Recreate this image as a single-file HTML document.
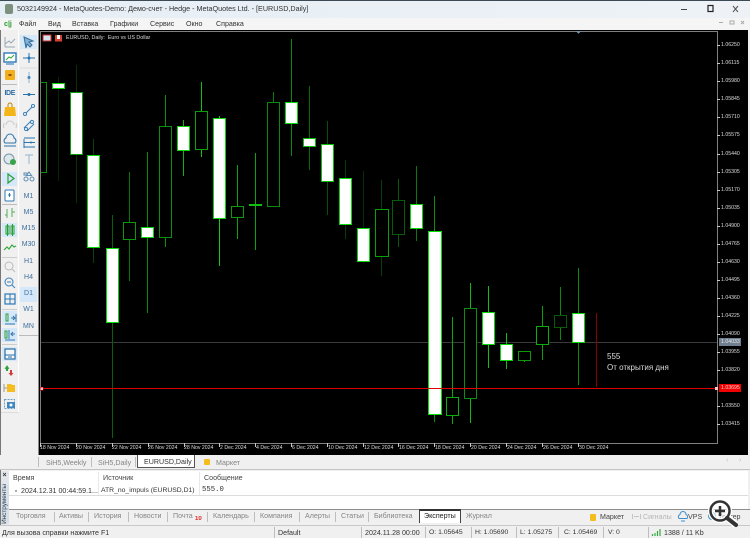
<!DOCTYPE html>
<html><head><meta charset="utf-8"><style>
html,body{margin:0;padding:0;width:750px;height:538px;overflow:hidden;background:#f0f0f0}
body{position:relative;font-family:"Liberation Sans","Noto Sans CJK SC",sans-serif}
.a{position:absolute}
.t{position:absolute;white-space:nowrap;line-height:10px;font-size:7.1px;color:#444;filter:blur(.2px)}
.g{color:#858585}
.s{position:absolute;width:1px;background:#bdbdbd}
.tf{position:absolute;left:20px;width:17px;height:14px;line-height:14px;text-align:center;font-size:7px;color:#3d6f9e;filter:blur(.2px)}
.ax{position:absolute;left:721px;font-size:5.2px;line-height:8px;color:#ddd;white-space:nowrap;filter:blur(.2px)}
.dt{position:absolute;top:444px;font-size:5.2px;line-height:8px;color:#ddd;white-space:nowrap;filter:blur(.2px)}
.hl{position:absolute;background:#d5e8f9}
svg{position:absolute;left:0;top:0}
</style></head><body>
<!-- title bar -->
<div class="a" style="left:0;top:0;width:750px;height:18px;background:linear-gradient(90deg,#e6eef5,#e9f0f6 50%,#eef2f6);border-top:1px solid #3c4a55;box-sizing:border-box"></div>
<div class="t" style="left:17px;top:4px;font-size:7.2px;color:#333">5032149924 - MetaQuotes-Demo: Демо-счет - Hedge - MetaQuotes Ltd. - [EURUSD,Daily]</div>
<div class="a" style="left:5px;top:4px;width:8px;height:10px;background:#7d8f7d;border-radius:2px"></div>
<!-- menu -->
<div class="a" style="left:0;top:18px;width:750px;height:12px;background:#f5f5f5"></div>
<div class="t" style="left:19px;top:19px;color:#333">Файл</div>
<div class="t" style="left:48px;top:19px;color:#333">Вид</div>
<div class="t" style="left:72px;top:19px;color:#333">Вставка</div>
<div class="t" style="left:110px;top:19px;color:#333">Графики</div>
<div class="t" style="left:150px;top:19px;color:#333">Сервис</div>
<div class="t" style="left:186px;top:19px;color:#333">Окно</div>
<div class="t" style="left:216px;top:19px;color:#333">Справка</div>
<div class="t" style="left:4px;top:19px;color:#2a9a2a;font-weight:bold">c|j</div>
<!-- left columns -->
<div class="a" style="left:0;top:30px;width:1px;height:495px;background:#777"></div>
<div class="a" style="left:18px;top:30px;width:1px;height:382px;background:#fff"></div>
<div class="a" style="left:1px;top:412px;width:18px;height:1px;background:#ddd"></div>
<div class="a" style="left:38px;top:30px;width:1px;height:425px;background:#8a8a8a"></div>
<div class="a" style="left:19px;top:335px;width:19px;height:1px;background:#bbb"></div>
<div class="hl" style="left:20px;top:35px;width:17px;height:14px"></div>
<div class="hl" style="left:2px;top:172px;width:15px;height:14px"></div>
<div class="hl" style="left:2px;top:223px;width:15px;height:14px"></div>
<div class="hl" style="left:2px;top:311px;width:15px;height:14px"></div>
<div class="hl" style="left:2px;top:328px;width:15px;height:14px"></div>
<div class="hl" style="left:2px;top:347px;width:15px;height:14px"></div>
<div class="hl" style="left:20px;top:287px;width:17px;height:15px"></div>
<div class="a" style="left:2px;top:84px;width:15px;height:1px;background:#bbb"></div>
<div class="a" style="left:2px;top:204px;width:15px;height:1px;background:#bbb"></div>
<div class="a" style="left:2px;top:257px;width:15px;height:1px;background:#ccc"></div>
<div class="a" style="left:2px;top:309px;width:15px;height:1px;background:#ccc"></div>
<div class="a" style="left:2px;top:344px;width:15px;height:1px;background:#ccc"></div>
<div class="tf" style="top:190px">M1</div><div class="tf" style="top:206px">M5</div><div class="tf" style="top:222px">M15</div><div class="tf" style="top:238px">M30</div><div class="tf" style="top:255px">H1</div><div class="tf" style="top:271px">H4</div><div class="tf" style="top:287px">D1</div><div class="tf" style="top:303px">W1</div><div class="tf" style="top:320px">MN</div>
<div class="t" style="left:4.500px;top:89px;font-size:7px;font-weight:bold;color:#2d6ea5;letter-spacing:-.4px">IDE</div>
<svg width="40" height="420" viewBox="0 0 40 420" fill="none" style="left:0;top:0">
<path d="M5 47V37M5 47H15M5 44l4-3 2 2 4-4" stroke="#9aa7b2"/>
<rect x="4" y="53" width="12" height="9" fill="#fff" stroke="#1f6fb5" stroke-width="1.3"/><path d="M6 60l3-3 2 1 3-3" stroke="#3a3"/><path d="M6 64h8" stroke="#1f6fb5"/>
<rect x="5" y="70" width="10" height="10" rx="1" fill="#f2b01e"/><path d="M8.500 75h3" stroke="#8a5a00" stroke-width="2"/>
<path d="M5 107h10l1 9H4z" fill="#f3b51a"/><path d="M8 107v-2a2 2 0 014 0v2" stroke="#b98500"/>
<path d="M6 125a4 4 0 018 0M4 123a8 8 0 000 5M16 123a8 8 0 010 5" stroke="#c8c8c8"/>
<path d="M5 143a3 3 0 011-5 4 4 0 018 0 3 3 0 011 5zM4 146h12" stroke="#2c75ad"/>
<circle cx="9" cy="159" r="5" stroke="#7a93a5" fill="#dce8ee"/><circle cx="13" cy="162" r="3" fill="#3aa34a"/>
<path d="M8 174v9l6-4.500z" stroke="#2d9c3c" stroke-width="1.200"/>
<rect x="5" y="190" width="9" height="11" rx="1" fill="#fff" stroke="#2f78b5"/><path d="M8 195h3M9.500 193v4" stroke="#2f78b5"/>
<path d="M7 209v9M12 208v9M5 215h2M12 212h3" stroke="#55b05c"/>
<rect x="6" y="226" width="3" height="8" stroke="#26a032"/><rect x="11" y="226" width="3" height="8" stroke="#26a032"/><path d="M7.500 224v12M12.500 224v12" stroke="#26a032"/>
<path d="M4 250l3-3 2 2 3-4 2 2 2-1" stroke="#35a83f" stroke-width="1.200"/>
<circle cx="9" cy="266" r="4" stroke="#bbb"/><path d="M12 269l3 3" stroke="#bbb"/>
<circle cx="9" cy="282" r="4" stroke="#3b80b8"/><path d="M12 285l3 3M7 282h4" stroke="#3b80b8"/>
<rect x="5" y="294" width="10" height="10" stroke="#2b78b8" stroke-width="1.200"/><path d="M5 299h10M10 294v10" stroke="#2b78b8"/>
<rect x="6" y="314" width="2" height="7" stroke="#2aa03a"/><path d="M11 318h4M13 316l2 2-2 2M16 314v8M5 324h10" stroke="#3477ad"/>
<rect x="5" y="331" width="2" height="7" stroke="#2aa03a"/><path d="M15 334h-4M13 332l-2 2 2 2M9 330v9M5 340h10" stroke="#3477ad"/>
<rect x="5" y="349" width="10" height="10" fill="#f4f8fb" stroke="#2a6ea5" stroke-width="1.200"/><path d="M5 355h10M8 357h4" stroke="#2a6ea5"/>
<path d="M7 367v4" stroke="#2fa03d" stroke-width="2"/><path d="M5 369l2-3 2 3" stroke="#2fa03d"/><path d="M11 370v4" stroke="#d23b3b" stroke-width="2"/><path d="M8.500 373l2.500 3 2.500-3z" fill="#d23b3b"/>
<path d="M4 384v8M4 388h3" stroke="#999"/><path d="M7 384h4l1 1h3v7H7z" fill="#f5bd1f"/>
<rect x="4.500" y="399.500" width="10" height="9" stroke="#6c9fc8" stroke-dasharray="2 1"/><rect x="7" y="402" width="8" height="6" fill="#3f88c0"/><circle cx="11" cy="405" r="1.500" fill="#fff"/>
<path d="M24 37l9 4-4 1 3 3-2 2-3-3-1 4z" fill="#7fb2dc" stroke="#3a6c94"/>
<path d="M29 53v10M23 58h12" stroke="#2674b0"/><circle cx="29" cy="58" r="1.500" fill="#2674b0"/>
<path d="M20 68h17" stroke="#ddd"/>
<path d="M29 72v11" stroke="#8cb4d2"/><circle cx="29" cy="77.500" r="1.500" fill="#3d82b8"/>
<path d="M23 94.500h12" stroke="#2674b0"/><circle cx="29" cy="94.500" r="1.500" fill="#2674b0"/>
<path d="M25 114l8-8" stroke="#3b80b8"/><circle cx="25" cy="114" r="1.500" stroke="#3b80b8" fill="#fff"/><circle cx="33" cy="106" r="1.500" stroke="#3b80b8" fill="#fff"/>
<path d="M24 128l8-8M27 131l7-7" stroke="#3b80b8"/><circle cx="26" cy="129" r="1.500" stroke="#3b80b8" fill="#fff"/><circle cx="32" cy="122" r="1.500" stroke="#3b80b8" fill="#fff"/>
<path d="M24 138h11M24 142.500h11M24 147h11M24 139v9" stroke="#2674b0"/><circle cx="31" cy="142.500" r="1" fill="#2674b0"/>
<path d="M25 155h8M29 155v9" stroke="#8cb4d2"/>
<circle cx="26" cy="179" r="2" stroke="#5e8fb5"/><circle cx="32" cy="179" r="2" stroke="#5e8fb5"/><path d="M29 172l2.500 3.500h-5z" stroke="#5e8fb5"/><rect x="24" y="173" width="3" height="2" stroke="#5e8fb5"/>
</svg>
<!-- chart -->
<div class="a" style="left:39px;top:30px;width:709px;height:425px;background:#000"></div>
<svg width="750" height="538" viewBox="0 0 750 538" shape-rendering="crispEdges">
<path d="M40.500 31.500H717.500V443.500H40.500Z" fill="none" stroke="#808080"/>
<rect x="41" y="342" width="676" height="1" fill="#3a3a3e"/>
<g fill="#0d7a0d">
<rect x="58" y="77" width="1" height="104" fill="#032603"/><rect x="76" y="65" width="1" height="138" fill="#063206"/><rect x="93" y="139" width="1" height="124" fill="#084208"/><rect x="112" y="215" width="1" height="223" fill="#0a600a"/><rect x="129" y="172" width="1" height="109" fill="#0a760a"/><rect x="147" y="152" width="1" height="161" fill="#0b8a0b"/><rect x="165" y="95" width="1" height="152" fill="#0c900c"/><rect x="183" y="120" width="1" height="56" fill="#10b010"/><rect x="201" y="82" width="1" height="75" fill="#12c012"/><rect x="219" y="116" width="1" height="150" fill="#14c814"/><rect x="237" y="165" width="1" height="74" fill="#0fa00f"/><rect x="255" y="153" width="1" height="97" fill="#0fa00f"/><rect x="273" y="92" width="1" height="12" fill="#0a7a0a"/><rect x="291" y="39" width="1" height="117" fill="#0b8a0b"/><rect x="309" y="86" width="1" height="84" fill="#0a6a0a"/><rect x="327" y="121" width="1" height="94" fill="#085008"/><rect x="345" y="160" width="1" height="79" fill="#063a06"/><rect x="363" y="171" width="1" height="92" fill="#052e05"/><rect x="381" y="180" width="1" height="96" fill="#064006"/><rect x="398" y="179" width="1" height="68" fill="#085a08"/><rect x="416" y="166" width="1" height="75" fill="#0a780a"/><rect x="434" y="196" width="1" height="226" fill="#0b8c0b"/><rect x="452" y="317" width="1" height="107" fill="#0da80d"/><rect x="470" y="283" width="1" height="140" fill="#0ebc0e"/><rect x="488" y="286" width="1" height="82" fill="#10c010"/><rect x="506" y="333" width="1" height="36" fill="#10c010"/><rect x="524" y="351" width="1" height="11" fill="#0da00d"/><rect x="542" y="306" width="1" height="54" fill="#0da00d"/><rect x="560" y="287" width="1" height="53" fill="#0b8a0b"/><rect x="578" y="268" width="1" height="117" fill="#0b8a0b"/>
</g>
<path d="M41 82.500H46.500V172.500H41" fill="none" stroke="#0b8c0b"/>
<g fill="#fff" stroke="#06d806">
<rect x="52.500" y="83.500" width="12" height="5"/>
<rect x="70.500" y="92.500" width="12" height="62" stroke="#06a006"/>
<rect x="87.500" y="155.500" width="12" height="92"/>
<rect x="106.500" y="248.500" width="12" height="74" stroke="#00e000"/>
<rect x="141.500" y="227.500" width="12" height="10"/>
<rect x="177.500" y="126.500" width="12" height="24"/>
<rect x="213.500" y="118.500" width="12" height="100"/>
<rect x="285.500" y="102.500" width="12" height="21"/>
<rect x="303.500" y="138.500" width="12" height="8" stroke="#06c006"/>
<rect x="321.500" y="144.500" width="12" height="37" stroke="#06c006"/>
<rect x="339.500" y="178.500" width="12" height="46"/>
<rect x="357.500" y="228.500" width="12" height="33"/>
<rect x="410.500" y="204.500" width="12" height="24"/>
<rect x="428.500" y="231.500" width="13" height="183" stroke="#00e000"/>
<rect x="482.500" y="312.500" width="12" height="32"/>
<rect x="500.500" y="344.500" width="12" height="16"/>
<rect x="572.500" y="313.500" width="12" height="29"/>
</g>
<g fill="#000">
<rect x="123.500" y="222.500" width="12" height="17" stroke="#0a9a0a"/>
<rect x="159.500" y="126.500" width="12" height="111" stroke="#0a900a"/>
<rect x="195.500" y="111.500" width="12" height="38" stroke="#0aa00a"/>
<rect x="231.500" y="206.500" width="12" height="11" stroke="#0a9a0a"/>
<rect x="267.500" y="102.500" width="12" height="104" stroke="#0a8a0a"/>
<rect x="375.500" y="209.500" width="13" height="47" stroke="#08a008"/>
<rect x="392.500" y="200.500" width="12" height="34" stroke="#075c07"/>
<rect x="446.500" y="397.500" width="12" height="18" stroke="#0ab00a"/>
<rect x="464.500" y="308.500" width="12" height="90" stroke="#0a900a"/>
<rect x="518.500" y="351.500" width="12" height="9" stroke="#0a9a0a"/>
<rect x="536.500" y="326.500" width="12" height="18" stroke="#0ab00a"/>
<rect x="554.500" y="315.500" width="12" height="12" stroke="#075c07"/>
</g>
<rect x="249" y="204" width="13" height="2" fill="#10c010"/>
<rect x="596" y="313" width="1" height="74" fill="#8a0000"/>
<rect x="41" y="388" width="676" height="1" fill="#e00000"/>
<rect x="40" y="387" width="3" height="3" fill="#ffc8c8" stroke="#e00000" stroke-width=".5"/>
<rect x="715" y="387" width="3" height="3" fill="#ffc8c8"/>
<path d="M576 31h5l-2.500 3z" fill="#7894a8"/>
<g fill="#c8c8c8">
<rect x="717" y="45" width="3" height="1"/><rect x="717" y="63" width="3" height="1"/><rect x="717" y="81" width="3" height="1"/><rect x="717" y="99" width="3" height="1"/><rect x="717" y="117" width="3" height="1"/><rect x="717" y="135" width="3" height="1"/><rect x="717" y="154" width="3" height="1"/><rect x="717" y="172" width="3" height="1"/><rect x="717" y="190" width="3" height="1"/><rect x="717" y="208" width="3" height="1"/><rect x="717" y="226" width="3" height="1"/><rect x="717" y="244" width="3" height="1"/><rect x="717" y="262" width="3" height="1"/><rect x="717" y="280" width="3" height="1"/><rect x="717" y="298" width="3" height="1"/><rect x="717" y="316" width="3" height="1"/><rect x="717" y="334" width="3" height="1"/><rect x="717" y="352" width="3" height="1"/><rect x="717" y="370" width="3" height="1"/><rect x="717" y="406" width="3" height="1"/><rect x="717" y="424" width="3" height="1"/>
<rect x="40" y="443" width="1" height="4"/><rect x="76" y="443" width="1" height="4"/><rect x="112" y="443" width="1" height="4"/><rect x="148" y="443" width="1" height="4"/><rect x="184" y="443" width="1" height="4"/><rect x="219" y="443" width="1" height="4"/><rect x="255" y="443" width="1" height="4"/><rect x="291" y="443" width="1" height="4"/><rect x="327" y="443" width="1" height="4"/><rect x="363" y="443" width="1" height="4"/><rect x="398" y="443" width="1" height="4"/><rect x="434" y="443" width="1" height="4"/><rect x="470" y="443" width="1" height="4"/><rect x="506" y="443" width="1" height="4"/><rect x="542" y="443" width="1" height="4"/><rect x="578" y="443" width="1" height="4"/>
</g>
<rect x="43" y="35" width="8" height="6" fill="#d8e4f0" stroke="#c03030" stroke-width=".7"/>
<rect x="55" y="35" width="7" height="6.500" fill="#d8412f"/><rect x="57" y="35" width="3" height="4" fill="#fff"/>
</svg>
<div class="t" style="left:66px;top:33px;font-size:5.35px;color:#ddd">EURUSD, Daily:&nbsp; Euro vs US Dollar</div>
<div class="ax" style="top:41px">1.06250</div><div class="ax" style="top:59px">1.06115</div><div class="ax" style="top:77px">1.05980</div><div class="ax" style="top:95px">1.05845</div><div class="ax" style="top:113px">1.05710</div><div class="ax" style="top:131px">1.05575</div><div class="ax" style="top:150px">1.05440</div><div class="ax" style="top:168px">1.05305</div><div class="ax" style="top:186px">1.05170</div><div class="ax" style="top:204px">1.05035</div><div class="ax" style="top:222px">1.04900</div><div class="ax" style="top:240px">1.04765</div><div class="ax" style="top:258px">1.04630</div><div class="ax" style="top:276px">1.04495</div><div class="ax" style="top:294px">1.04360</div><div class="ax" style="top:312px">1.04225</div><div class="ax" style="top:330px">1.04090</div><div class="ax" style="top:348px">1.03955</div><div class="ax" style="top:366px">1.03820</div><div class="ax" style="top:402px">1.03550</div><div class="ax" style="top:420px">1.03415</div>
<div class="ax" style="left:719px;top:338px;width:22px;height:8px;background:#708090;color:#e8e8e8;padding-left:2px;box-sizing:border-box">1.04033</div>
<div class="ax" style="left:719px;top:384px;width:22px;height:8px;background:#f00000;color:#ffd0d0;padding-left:2px;box-sizing:border-box">1.03695</div>
<div class="t" style="left:607px;top:352px;font-size:8px;color:#ddd">555</div>
<div class="t" style="left:607px;top:363px;font-size:8px;color:#ddd">От открытия дня</div>
<div class="dt" style="left:40px">18 Nov 2024</div><div class="dt" style="left:76px">20 Nov 2024</div><div class="dt" style="left:112px">22 Nov 2024</div><div class="dt" style="left:148px">26 Nov 2024</div><div class="dt" style="left:184px">28 Nov 2024</div><div class="dt" style="left:220px">2 Dec 2024</div><div class="dt" style="left:256px">4 Dec 2024</div><div class="dt" style="left:292px">6 Dec 2024</div><div class="dt" style="left:328px">10 Dec 2024</div><div class="dt" style="left:364px">12 Dec 2024</div><div class="dt" style="left:399px">16 Dec 2024</div><div class="dt" style="left:435px">18 Dec 2024</div><div class="dt" style="left:471px">20 Dec 2024</div><div class="dt" style="left:507px">24 Dec 2024</div><div class="dt" style="left:543px">26 Dec 2024</div><div class="dt" style="left:579px">30 Dec 2024</div>
<!-- chart tabs -->
<div class="a" style="left:0;top:455px;width:750px;height:15px;background:#f0f0f0;border-bottom:1px solid #c4c4c4;box-sizing:border-box"></div>
<div class="s" style="left:38px;top:457px;height:10px"></div><div class="s" style="left:91px;top:457px;height:10px"></div><div class="s" style="left:135px;top:457px;height:10px"></div>
<div class="t g" style="left:46px;top:458px">SiH5,Weekly</div>
<div class="t g" style="left:98px;top:458px">SiH5,Daily</div>
<div class="a" style="left:137px;top:455px;width:58px;height:13px;background:#fff;border:1px solid #555;border-top:none;box-sizing:border-box"></div>
<div class="t" style="left:144px;top:457px;color:#333">EURUSD,Daily</div>
<div class="a" style="left:204px;top:459px;width:6px;height:6px;background:#f3bd1d;border-radius:1px"></div>
<div class="t g" style="left:216px;top:458px">Маркет</div>
<div class="t" style="left:726px;top:456px;color:#bbb;font-size:7px">‹</div><div class="t" style="left:739px;top:456px;color:#bbb;font-size:7px">›</div>
<!-- panel -->
<div class="a" style="left:9px;top:471px;width:739px;height:38px;background:#fff"></div>
<div class="a" style="left:9px;top:495px;width:739px;height:1px;background:#dcdcdc"></div>
<div class="a" style="left:9px;top:509px;width:741px;height:1px;background:#8d8d8d"></div>
<div class="s" style="left:98px;top:472px;height:23px;background:#e8e8e8"></div>
<div class="s" style="left:199px;top:472px;height:23px;background:#e8e8e8"></div>
<div class="a" style="left:1px;top:471px;width:8px;height:54px;background:#e2e6ea"></div>
<div class="a" style="left:1px;top:485px;width:8px;height:38px;background:#d6dfe8"></div>
<div class="t" style="left:2.500px;top:471px;font-size:7px;font-weight:bold;color:#333">×</div>
<div class="t" style="left:-15px;top:499px;width:40px;text-align:center;font-size:6.4px;transform:rotate(-90deg);color:#2a3a4a">Инструменты</div>
<div class="t" style="left:13px;top:473px;color:#444">Время</div>
<div class="t" style="left:103px;top:473px;color:#444">Источник</div>
<div class="t" style="left:204px;top:473px;color:#444">Сообщение</div>
<div class="a" style="left:15px;top:490px;width:2px;height:2px;background:#aaa"></div>
<div class="t" style="left:21px;top:486px;color:#333">2024.12.31 00:44:59.1...</div>
<div class="t" style="left:101px;top:486px;color:#333;font-size:6.800px">ATR_no_impuls (EURUSD,D1)</div>
<div class="t" style="left:202px;top:485px;color:#333;font-family:'Liberation Mono',monospace;font-size:7.300px">555.0</div>
<!-- bottom tabs -->
<div class="t g" style="left:16px;top:511px">Торговля</div><div class="s" style="left:54px;top:512px;height:10px"></div>
<div class="t g" style="left:59px;top:511px">Активы</div><div class="s" style="left:88px;top:512px;height:10px"></div>
<div class="t g" style="left:94px;top:511px">История</div><div class="s" style="left:128px;top:512px;height:10px"></div>
<div class="t g" style="left:134px;top:511px">Новости</div><div class="s" style="left:167px;top:512px;height:10px"></div>
<div class="t g" style="left:173px;top:511px">Почта</div><div class="t" style="left:195px;top:514px;font-size:6px;font-weight:bold;color:#e02020">10</div><div class="s" style="left:207px;top:512px;height:10px"></div>
<div class="t g" style="left:213px;top:511px">Календарь</div><div class="s" style="left:254px;top:512px;height:10px"></div>
<div class="t g" style="left:260px;top:511px">Компания</div><div class="s" style="left:299px;top:512px;height:10px"></div>
<div class="t g" style="left:305px;top:511px">Алерты</div><div class="s" style="left:335px;top:512px;height:10px"></div>
<div class="t g" style="left:341px;top:511px">Статьи</div><div class="s" style="left:368px;top:512px;height:10px"></div>
<div class="t g" style="left:374px;top:511px">Библиотека</div>
<div class="a" style="left:419px;top:509px;width:42px;height:14px;background:#fff;border-left:1px solid #444;border-right:1px solid #444;border-top:2px solid #333;box-sizing:border-box"></div>
<div class="t" style="left:424px;top:511px;color:#222">Эксперты</div>
<div class="t g" style="left:466px;top:511px">Журнал</div>
<div class="a" style="left:590px;top:514px;width:6px;height:7px;background:#f3bd1d;border-radius:1px"></div>
<div class="t" style="left:600px;top:512px;color:#444">Маркет</div>
<div class="t" style="left:643px;top:512px;color:#b5b5b5">Сигналы</div>
<svg width="750" height="538" fill="none"><path d="M632.500 514v5M640.500 514v5M634 516.500h5" stroke="#c4c4c4"/><path d="M679 518.500a2.500 2.500 0 011-4 3 3 0 016 0 2.500 2.500 0 011 4zM681 521h4" stroke="#3e8fca"/><circle cx="712" cy="516" r="3.500" stroke="#3e8fca"/></svg>
<div class="t" style="left:688px;top:512px;color:#444">VPS</div>
<div class="t" style="left:718px;top:512px;color:#444">Тестер</div>
<!-- status -->
<div class="a" style="left:0;top:525px;width:750px;height:13px;background:#f0f0f0;border-top:1px solid #c8c8c8;box-sizing:border-box"></div>
<div class="t" style="left:2px;top:528px;color:#333">Для вызова справки нажмите F1</div>
<div class="s" style="left:274px;top:527px;height:11px"></div><div class="t" style="left:278px;top:528px;color:#333">Default</div>
<div class="s" style="left:361px;top:527px;height:11px"></div><div class="t" style="left:365px;top:528px;color:#333">2024.11.28 00:00</div>
<div class="s" style="left:425px;top:527px;height:11px"></div><div class="t" style="left:429px;top:528px;color:#333;font-size:6.800px">O: 1.05645</div>
<div class="s" style="left:471px;top:527px;height:11px"></div><div class="t" style="left:475px;top:528px;color:#333;font-size:6.800px">H: 1.05690</div>
<div class="s" style="left:516px;top:527px;height:11px"></div><div class="t" style="left:520px;top:528px;color:#333;font-size:6.800px">L: 1.05275</div>
<div class="s" style="left:558px;top:527px;height:11px"></div><div class="t" style="left:564px;top:528px;color:#333;font-size:6.800px">C: 1.05469</div>
<div class="s" style="left:603px;top:527px;height:11px"></div><div class="t" style="left:608px;top:528px;color:#333;font-size:6.800px">V: 0</div>
<div class="s" style="left:648px;top:527px;height:11px"></div>
<div class="t" style="left:664px;top:528px;color:#333">1388 / 11 Kb</div>
<svg width="750" height="538" fill="none">
<path d="M652.500 536v-2M655 536v-3M657.500 536v-5M660 536v-7" stroke="#35a93f" stroke-width="1.200"/>
<circle cx="720" cy="511" r="9.500" fill="#fff" fill-opacity=".6" stroke="#fff" stroke-width="5"/>
<path d="M728 518l8 7" stroke="#fff" stroke-width="7"/>
<circle cx="720" cy="511" r="9.500" stroke="#333" stroke-width="2.500"/>
<path d="M727 518l9 7" stroke="#333" stroke-width="4" stroke-linecap="round"/>
<path d="M715 511h10M720 506v10" stroke="#333" stroke-width="2.500"/>
</svg>
<!-- window controls -->
<svg width="750" height="538" fill="none">
<path d="M681 9.500h6" stroke="#444"/><rect x="708" y="5.500" width="5" height="6" stroke="#222" stroke-width="1.200"/><path d="M733 6l5 6M738 6l-5 6" stroke="#555"/>
<path d="M719 22.500h4" stroke="#aaa"/><rect x="730" y="21" width="4" height="3" stroke="#aaa"/><path d="M741 21l3 3M744 21l-3 3" stroke="#aaa"/>
</svg>
</body></html>
